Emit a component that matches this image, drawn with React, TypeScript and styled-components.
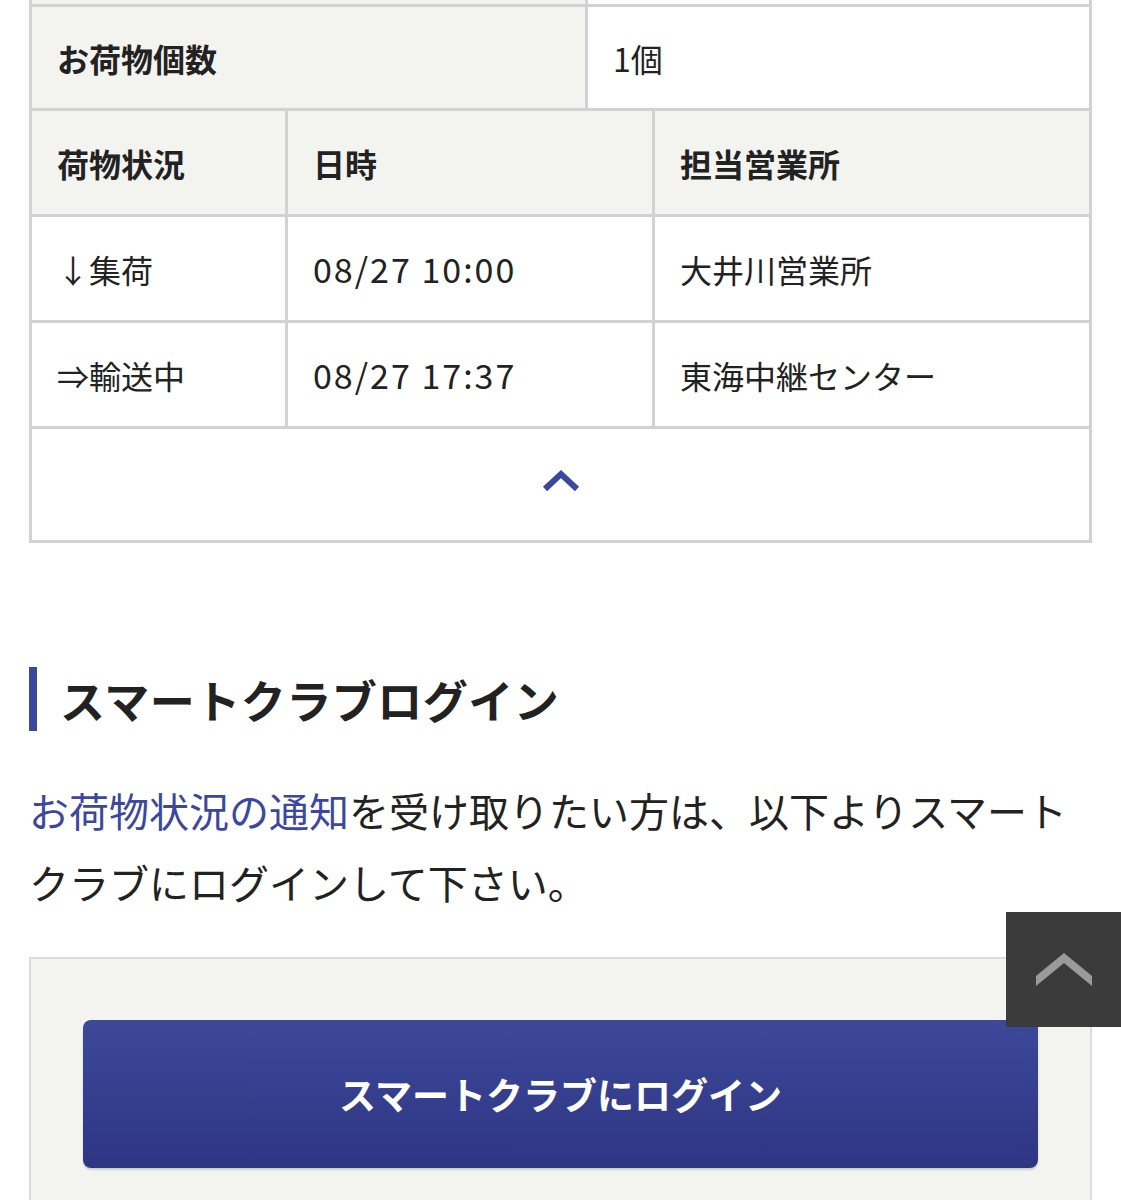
import React from 'react'
import styled, { createGlobalStyle } from 'styled-components';

const GlobalStyle = createGlobalStyle`
  html, body {
    margin: 0;
    padding: 0;
    background: #fff;
  }
  body {
    font-family: "Noto Sans CJK JP", "Noto Sans", sans-serif;
    color: #222;
  }
`

const App = () => {
  return (
    <>
      <GlobalStyle />
      <Page>
        <Table>
          <Row cols="556px 1fr" h={4}>
            <Cell head />
            <Cell />
          </Row>
          <Row cols="556px 1fr" h={101}>
            <Cell head>お荷物個数</Cell>
            <Cell>1個</Cell>
          </Row>
          <Row cols="256px 367px 1fr">
            <Cell head>荷物状況</Cell>
            <Cell head>日時</Cell>
            <Cell head>担当営業所</Cell>
          </Row>
          <Row cols="256px 367px 1fr">
            <Cell>↓集荷</Cell>
            <Cell date>08/27 10:00</Cell>
            <Cell>大井川営業所</Cell>
          </Row>
          <Row cols="256px 367px 1fr">
            <Cell>⇒輸送中</Cell>
            <Cell date>08/27 17:37</Cell>
            <Cell>東海中継センター</Cell>
          </Row>
          <Toggle>
            <svg width="40" height="26" viewBox="0 0 40 26">
              <polyline points="4,21 20,6 36,21" fill="none" stroke="#3b47a0" strokeWidth="6" strokeLinejoin="miter" />
            </svg>
          </Toggle>
        </Table>

        <Heading>スマートクラブログイン</Heading>
        <Lead>
          <Link>お荷物状況の通知</Link>を受け取りたい方は、以下よりスマートクラブにログインして下さい。
        </Lead>

        <LoginBox>
          <LoginButton>スマートクラブにログイン</LoginButton>
        </LoginBox>
      </Page>
      <PageTop aria-label="ページトップへ">
        <svg width="56" height="33" viewBox="0 0 56 33">
          <polygon points="0,23 28,0 56,23 56,33 28,10 0,33" fill="#9a9a9a" />
        </svg>
      </PageTop>
    </>
  )
}

const Page = styled.div`
  padding: 0 29px;
`

const Table = styled.div`
  border: 3px solid #d2d2d2;
  border-top: none;
`

const Row = styled.div<{ cols: string; h?: number }>`
  display: grid;
  grid-template-columns: ${p => p.cols};
  height: ${p => p.h ?? 103}px;
  border-bottom: 3px solid #d2d2d2;
`

const Cell = styled.div<{ head?: boolean; date?: boolean }>`
  display: flex;
  align-items: center;
  padding: 0 25px;
  font-size: ${p => (p.date ? 34 : 32)}px;
  letter-spacing: ${p => (p.date ? 2 : 0)}px;
  font-weight: ${p => (p.head ? 700 : 400)};
  background: ${p => (p.head ? '#f3f3f0' : '#fff')};
  border-right: 3px solid #d2d2d2;
  overflow: hidden;
  white-space: nowrap;
  &:last-child { border-right: none; }
`

const Toggle = styled.div`
  height: 111px;
  display: flex;
  align-items: center;
  justify-content: center;
  padding-bottom: 8px;
  box-sizing: border-box;
`

const Heading = styled.h2`
  margin: 124px 0 0;
  height: 64px;
  display: flex;
  align-items: center;
  border-left: 8px solid #3b47a0;
  padding-left: 23px;
  font-size: 45px;
  font-weight: 700;
  color: #222;
  letter-spacing: 0.5px;
`

const Lead = styled.p`
  margin: 43px 0 0;
  font-size: 40px;
  line-height: 72px;
  color: #222;
`

const Link = styled.span`
  color: #3b47a0;
`

const LoginBox = styled.div`
  margin-top: 39px;
  background: #f3f3f0;
  border: 2px solid #dcdcdc;
  border-bottom: none;
  padding: 61px 52px 40px;
`

const LoginButton = styled.button`
  display: block;
  width: 100%;
  height: 148px;
  border: none;
  border-radius: 8px;
  background: linear-gradient(#3d4899, #2e3684);
  color: #fff;
  font-family: "Noto Sans CJK JP", sans-serif;
  font-size: 37px;
  font-weight: 700;
  box-shadow: 0 2px 2px rgba(0, 0, 0, 0.15);
`

const PageTop = styled.div`
  position: fixed;
  right: 0;
  top: 912px;
  width: 115px;
  height: 115px;
  background: #3b3b3b;
  display: flex;
  align-items: center;
  justify-content: center;
`

export default App
